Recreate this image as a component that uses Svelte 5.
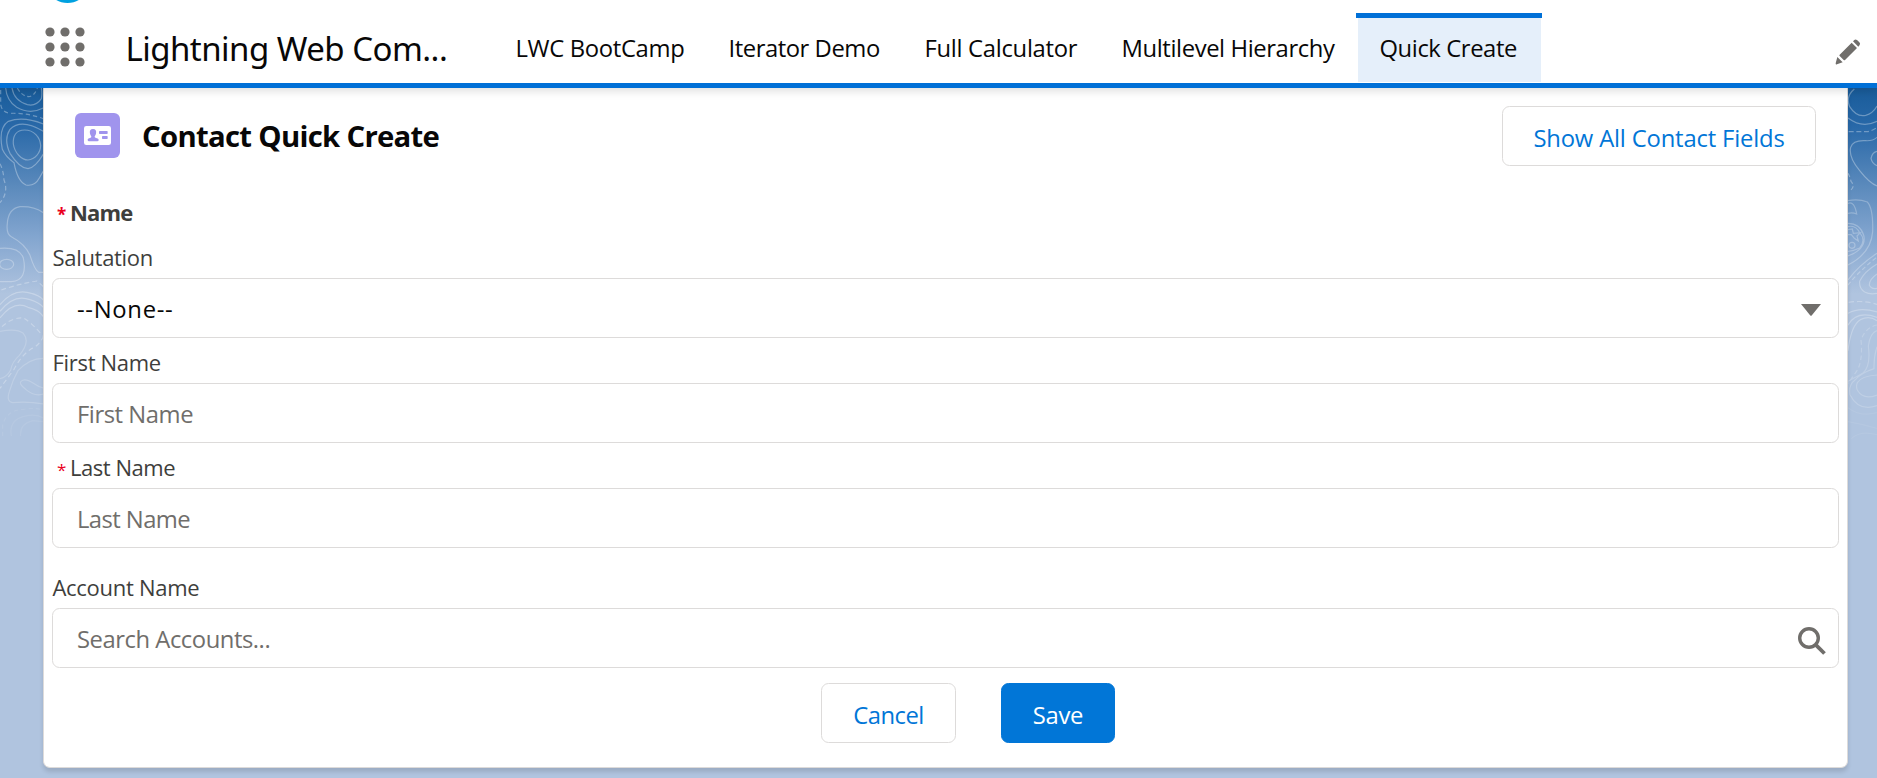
<script>
  const tabs = [
    { label: 'LWC BootCamp', width: 213, spacing: -0.33 },
    { label: 'Iterator Demo', width: 196, spacing: -0.45 },
    { label: 'Full Calculator', width: 197, spacing: -0.29 },
    { label: 'Multilevel Hierarchy', width: 258, spacing: -0.39 },
    { label: 'Quick Create', width: 183, spacing: -0.41, active: true },
  ];
  const dots = [6, 21, 36];
</script>

<div class="app">
  <header>
    <svg class="cloud" width="24" height="4" viewBox="0 0 24 4"><ellipse cx="11.5" cy="-9" rx="17" ry="12" fill="#00a1e0" /></svg>
    <svg class="launcher" width="42" height="42" viewBox="0 0 42 42" fill="#706e6b">
      {#each dots as y}
        {#each dots as x}
          <circle cx={x} cy={y} r="4.6" />
        {/each}
      {/each}
    </svg>
    <span class="app-name">Lightning Web Com...</span>
    <nav>
      {#each tabs as tab}
        <a class="tab" class:active={tab.active} style="width:{tab.width}px; letter-spacing:{tab.spacing}px">{tab.label}</a>
      {/each}
    </nav>
    <svg class="pencil" width="26" height="26" viewBox="0 0 78 78" fill="#706e6b">
      <path d="M54 7 58 3Q61 0 66 3L73 10Q77 14 74 18L70 23Z" />
      <path d="M50 11 66 27 30 63Q28 65 26 63L14 51Q12 49 14 47Z" />
      <path d="M7 54 23 70 6 76Q2 78 2 73Z" />
    </svg>
  </header>

  <div class="content">
    <svg class="topo" width="43" height="690" viewBox="0 24 129 2070">
      <g fill="none" stroke="#fff" stroke-width="3.6">
        <g opacity=".32">
          <path d="M17 24Q20 62 50 82Q90 105 130 84M36 24Q42 62 82 74Q108 80 124 56Q127 42 124 24" />
          <path d="M52 24Q65 48 86 50Q104 48 112 24" stroke-dasharray="12 8" />
          <path d="M2 30V72Q4 96 30 100Q80 98 130 116" stroke-dasharray="13 9" />
          <path d="M130 132Q70 108 25 124Q-6 144 7 208Q18 232 42 248Q52 304 78 315Q104 320 118 294L130 273" />
          <path d="M130 154Q64 114 30 148Q10 178 30 220Q58 264 84 266Q106 263 130 222" />
          <path d="M74 150C48 150 38 168 40 192C44 220 66 240 84 240C104 238 122 220 122 196C120 172 102 150 74 150Z" />
          <path d="M0 251Q10 270 12 300Q24 330 8 358L0 368" stroke-dasharray="14 9" />
        </g>
        <g opacity=".28">
          <path d="M130 398Q102 378 60 380Q25 386 22 430Q18 462 34 470Q76 492 90 526Q104 570 116 577H130" />
          <path d="M0 505Q58 500 70 534Q84 600 35 605H0" />
          <ellipse cx="20" cy="553" rx="21" ry="15" />
          <path d="M4 630Q55 612 110 603Q122 612 130 620" stroke-dasharray="15 9" />
          <path d="M0 674Q42 622 94 640Q118 646 130 660M0 694Q42 640 90 659Q118 668 130 682M0 714Q42 660 84 682Q118 690 130 710" />
          <path d="M6 740Q35 712 70 714Q98 730 130 770Q116 798 94 806Q62 828 42 868Q20 898 0 925" stroke-dasharray="15 10" />
        </g>
        <g opacity=".18">
          <path d="M0 754Q50 744 70 760Q92 786 58 826Q36 846 32 870Q20 892 0 896" />
          <path d="M130 835Q88 835 54 872Q38 900 28 935Q18 965 38 968Q85 964 130 972" />
          <path d="M130 942Q104 951 77 928Q56 912 63 904Q75 892 104 912Q118 922 130 924" />
        </g>
        <g opacity=".08">
          <path d="M8 1068V1035Q20 990 70 988Q108 982 130 990" stroke-dasharray="13 9" />
          <path d="M34 1068Q26 1020 72 1009Q108 1000 130 1014M62 1068Q58 1032 98 1022L130 1025" />
        </g>
      </g>
    </svg>

    <main class="card">
      <div class="card-header">
        <svg class="contact-icon" width="45" height="45" viewBox="0 0 135 135">
          <rect width="135" height="135" rx="18" fill="#a094ed" />
          <rect x="27" y="39" width="81" height="57" rx="7" fill="#fff" />
          <g fill="#a094ed">
            <path d="M54 48C46 48 43 54 45 62C46 67 50 69 49 72C47 76 38 75 38 81Q38 85 42 85H67Q71 85 71 81C71 75 61 76 59 72C58 69 62 67 63 62C65 54 62 48 54 48Z" />
            <rect x="72" y="54" width="26" height="9" rx="2" />
            <rect x="81" y="69" width="17" height="9" rx="2" />
          </g>
        </svg>
        <h2>Contact Quick Create</h2>
        <button class="btn show-all">Show All Contact Fields</button>
      </div>

      <form>
        <div class="group-label"><span class="req">*</span>Name</div>

        <div class="label" style="letter-spacing:-.31px">Salutation</div>
        <div class="box value">
          <span>--None--</span>
          <svg width="20" height="12" viewBox="0 0 20 12"><path d="M0 0H20L10.7 11.4Q10 12 9.3 11.4Z" fill="#706e6b" /></svg>
        </div>

        <div class="label" style="letter-spacing:-.31px">First Name</div>
        <div class="box" style="letter-spacing:-.45px">First Name</div>

        <div class="label required" style="letter-spacing:-.46px"><span class="req">*</span>Last Name</div>
        <div class="box" style="letter-spacing:-.56px">Last Name</div>

        <div class="label account" style="letter-spacing:-.29px">Account Name</div>
        <div class="box search" style="letter-spacing:-.46px">
          <span>Search Accounts...</span>
          <svg width="28" height="28" viewBox="0 0 28 28" fill="none" stroke="#706e6b">
            <circle cx="11" cy="11" r="9.3" stroke-width="3.4" />
            <path d="M17.8 17.8 26.5 26.5" stroke-width="3.8" />
          </svg>
        </div>

        <div class="actions">
          <button class="btn cancel" type="button">Cancel</button>
          <button class="btn save" type="button">Save</button>
        </div>
      </form>
    </main>

    <svg class="topo" width="29" height="690" viewBox="93 24 87 2070">
      <g fill="none" stroke="#fff" stroke-width="3.6">
        <g opacity=".32">
          <path d="M112 27Q85 50 98 80Q118 112 146 106Q168 100 180 78M93 114Q135 146 180 124" />
          <path d="M95 155H150Q165 153 180 142" stroke-dasharray="15 8" />
          <path d="M180 172Q166 184 145 182Q108 180 101 202Q94 232 128 272Q158 310 180 318M180 214Q166 216 162 235Q166 252 180 257" />
          <path d="M93 280Q99 290 102 304Q116 320 99 332" stroke-dasharray="13 8" />
        </g>
        <g opacity=".26">
          <path d="M93 362Q125 356 151 366Q169 385 167 455Q162 520 93 555" />
          <path d="M93 370Q112 362 119 402Q106 396 93 400M93 430Q128 430 140 465Q150 506 93 528M93 440Q116 434 128 458Q148 480 128 504Q112 512 93 514" />
          <path d="M93 449L106 447 109 460 130 458 120 468 124 483 112 475 103 464H93" />
          <circle cx="105" cy="496" r="9" />
          <path d="M93 615Q126 574 180 531" stroke-dasharray="13 8" />
          <path d="M93 600Q125 556 180 520M180 552Q142 574 128 604Q126 626 143 636Q158 644 180 640M180 582Q156 599 157 616Q164 629 180 625" />
          <path d="M95 667Q138 660 180 673" stroke-dasharray="16 9" />
          <path d="M93 700Q128 680 180 696M93 736Q118 690 180 712M93 812Q102 736 130 719Q158 706 180 722" />
        </g>
        <g opacity=".19">
          <path d="M180 735Q146 742 132 780Q138 842 120 872Q106 892 93 910" stroke-dasharray="14 9" />
          <path d="M180 752Q160 758 154 798Q162 858 138 879L93 904M180 800Q170 830 171 866Q130 880 114 900Q94 915 99 944Q125 996 180 977" />
          <path d="M180 885Q133 888 121 908Q112 930 136 946Q152 956 180 945" />
        </g>
        <g opacity=".07">
          <path d="M93 983Q130 1012 180 998M93 1025Q133 1032 180 1045M103 1076Q130 1050 180 1064" />
        </g>
      </g>
    </svg>
  </div>
</div>

<style>
  :global(body) { margin: 0; }
  .app {
    width: 1877px;
    height: 778px;
    overflow: hidden;
    background: #b0c4df;
    font-family: "Open Sans", "Noto Sans", sans-serif;
    font-size: 23.8px;
    color: #080707;
  }
  * { box-sizing: border-box; }

  header {
    position: relative;
    display: flex;
    align-items: flex-start;
    height: 88px;
    border-bottom: 5px solid #0070d7;
    background: #fff;
    box-shadow: 0 3px 9px rgba(0, 0, 0, .13);
    z-index: 1;
  }
  .cloud { position: absolute; left: 56px; top: 0; }
  .launcher { flex: none; margin: 25.5px 0 0 43.5px; }
  .app-name {
    width: 366px;
    padding-left: 40px;
    line-height: 98px;
    font-family: "Noto Sans", sans-serif;
    font-size: 33px;
    letter-spacing: -.53px;
    white-space: nowrap;
  }
  nav { display: flex; padding: 13px 0 0 42px; }
  .tab {
    height: 69px;
    padding-left: 22px;
    line-height: 71px;
    white-space: nowrap;
  }
  .tab.active {
    position: relative;
    background: #e5effa;
  }
  .tab.active::before {
    content: "";
    position: absolute;
    left: -2px;
    right: -1px;
    top: 0;
    height: 5px;
    background: #0070d7;
  }
  .pencil { margin: 38.5px 16px 0 auto; }

  .content {
    display: flex;
    align-items: flex-start;
    height: 690px;
    background: linear-gradient(#195c9a, #2868a8 38px, #5b8abc 98px, #82a5cf 148px, #b0c4df 206px, #b0c4df);
  }
  .topo { flex: none; display: block; }

  .card {
    flex: 1;
    height: 680px;
    border: 1px solid #dddbda;
    border-top: 0;
    border-radius: 0 0 7px 7px;
    background: #fff;
    box-shadow: 0 4px 4px rgba(0, 0, 0, .12);
  }
  .card-header {
    display: flex;
    height: 105px;
    padding: 18px 31px 0;
  }
  .contact-icon { margin-top: 7px; }
  h2 {
    margin: 0 auto 0 22px;
    font-size: 29.3px;
    line-height: 61px;
    font-weight: 700;
    letter-spacing: -.7px;
  }
  .btn {
    height: 60px;
    padding: 2px 0 0;
    border: 1px solid #dddbda;
    border-radius: 7.5px;
    background: #fff;
    color: #0176d7;
    font: inherit;
    line-height: 58px;
    text-align: center;
  }
  .show-all { width: 314px; letter-spacing: -.17px; }

  form { padding: 0 8px; }
  .group-label {
    height: 40px;
    padding-left: 5px;
    line-height: 38px;
    font-size: 22px;
    font-weight: 700;
    letter-spacing: -.87px;
    color: #3e3e3c;
  }
  .req { display: inline-block; width: 13px; color: #ea001e; letter-spacing: 0; font-size: 17px; line-height: 1; }
  .label {
    height: 45px;
    padding: 4px 0 0 .5px;
    line-height: 41px;
    font-size: 22px;
    color: #3e3e3c;
  }
  .label.required { padding-left: 5px; }
  .account { margin-top: 15px; }
  .box {
    display: flex;
    align-items: center;
    justify-content: space-between;
    height: 60px;
    padding: 2px 17px 0 24px;
    border: 1px solid #dddbda;
    border-radius: 7.5px;
    color: #706e6b;
  }
  .value { letter-spacing: .7px; color: #080707; }
  .value svg { margin-top: 2px; }
  .box.search { padding-right: 12px; }
  .search svg { margin-top: 3.5px; }
  .actions { display: flex; gap: 45px; padding: 15px 0 0 769px; }
  .cancel { width: 135px; letter-spacing: -.48px; }
  .save { width: 114px; background: #0176d7; border-color: #0176d7; color: #fff; letter-spacing: -.3px; }
</style>
